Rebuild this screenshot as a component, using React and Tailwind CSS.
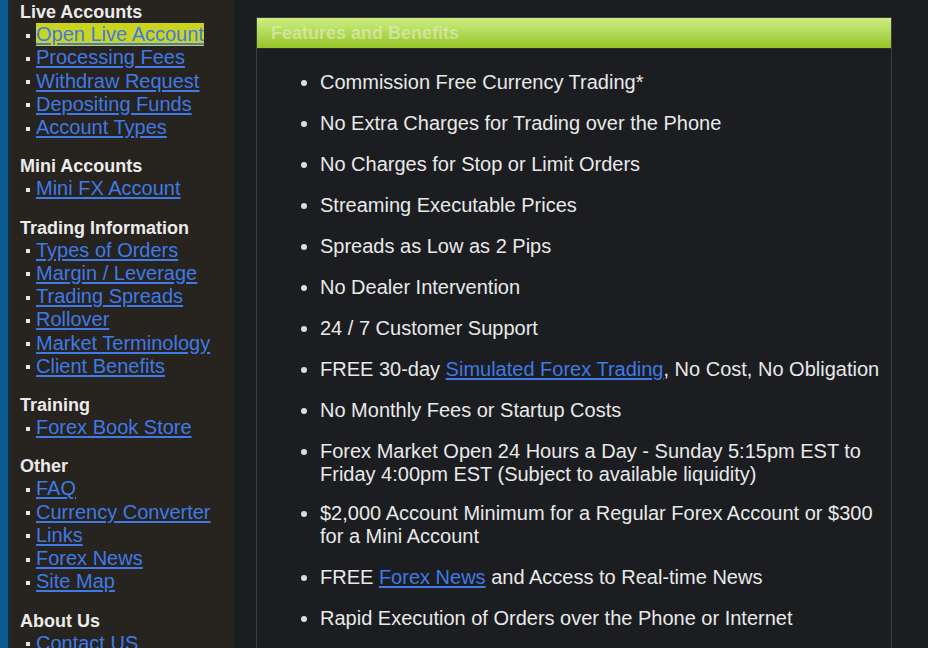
import React from 'react';

const sections = [
  { title: 'Live Accounts', links: ['Open Live Account', 'Processing Fees', 'Withdraw Request', 'Depositing Funds', 'Account Types'] },
  { title: 'Mini Accounts', links: ['Mini FX Account'] },
  { title: 'Trading Information', links: ['Types of Orders', 'Margin / Leverage', 'Trading Spreads', 'Rollover', 'Market Terminology', 'Client Benefits'] },
  { title: 'Training', links: ['Forex Book Store'] },
  { title: 'Other', links: ['FAQ', 'Currency Converter', 'Links', 'Forex News', 'Site Map'] },
  { title: 'About Us', links: ['Contact US'] },
];

const Link = ({ children }) => (
  <a href="#" className="text-[#3f7ae6] underline underline-offset-[2px]">{children}</a>
);

const features = [
  'Commission Free Currency Trading*',
  'No Extra Charges for Trading over the Phone',
  'No Charges for Stop or Limit Orders',
  'Streaming Executable Prices',
  'Spreads as Low as 2 Pips',
  'No Dealer Intervention',
  '24 / 7 Customer Support',
  <>FREE 30-day <Link>Simulated Forex Trading</Link>, No Cost, No Obligation</>,
  'No Monthly Fees or Startup Costs',
  'Forex Market Open 24 Hours a Day - Sunday 5:15pm EST to Friday 4:00pm EST (Subject to available liquidity)',
  '$2,000 Account Minimum for a Regular Forex Account or $300 for a Mini Account',
  <>FREE <Link>Forex News</Link> and Access to Real-time News</>,
  'Rapid Execution of Orders over the Phone or Internet',
];

export default function App() {
  return (
    <div
      className="flex h-[648px] w-[928px] overflow-hidden bg-[#1b1d20]"
      style={{ fontFamily: '"Liberation Sans", Arial, sans-serif' }}
    >
      {/* Left nav */}
      <div className="flex shrink-0">
        <div className="w-[8px] bg-[#0c5890]" />
        <div className="w-[2px] bg-[#1a2a35]" />
        <div className="w-[224px] bg-[#27231e] pl-[10px] pt-[2px] border-r-[4px] border-[#24251c]">
          {sections.map((s) => (
            <div key={s.title} className="mb-[17px]">
              <div className="text-[18px] font-bold leading-[21px] text-[#ebebeb]">{s.title}</div>
              <ul>
                {s.links.map((l) => (
                  <li key={l} className="flex items-center text-[20px] leading-[23.25px]">
                    <span className="ml-[6px] mr-[6px] mt-[2px] inline-block h-[4px] w-[4px] bg-[#e6e6e6]" />
                    {l === 'Open Live Account' ? (
                      <span className="bg-[#cbd41d]"><Link>{l}</Link></span>
                    ) : (
                      <Link>{l}</Link>
                    )}
                  </li>
                ))}
              </ul>
            </div>
          ))}
        </div>
      </div>

      {/* Main */}
      <div className="flex-1">
        <div className="ml-[22px] mt-[17px] w-[636px] border border-[#3b3e42] bg-[#1b1d20] pb-[20px]">
          <div className="h-[31px] border-b border-[#2b2f22] bg-gradient-to-b from-[#cdee80] to-[#96c41f] pl-[14px] text-[18px] font-bold leading-[31px] text-[#e3f0c4]/60">
            Features and Benefits
          </div>
          <ul className="list-disc pl-[63px] pr-[10px] pt-[22px] text-[20px] leading-[23px] text-[#e9e9e9] marker:text-[#dcdcdc]">
            {features.map((f, i) => (
              <li key={i} className={i === 9 ? 'mb-[16px]' : 'mb-[18px]'}>{f}</li>
            ))}
          </ul>
        </div>
      </div>
    </div>
  );
}
